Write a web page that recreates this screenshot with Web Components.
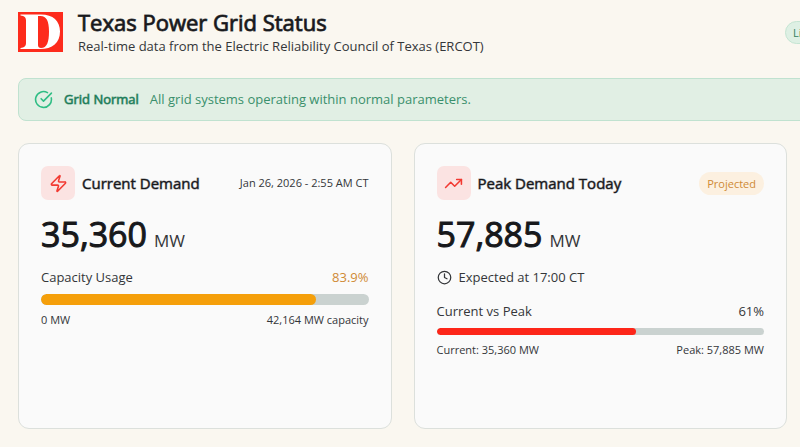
<!DOCTYPE html>
<html lang="en">
<head>
<meta charset="UTF-8">
<meta name="viewport" content="width=device-width, initial-scale=1">
<title>Texas Power Grid Status</title>
<style>
    body {
        margin: 0;
        overflow-x: hidden;
        background: #faf7f0;
        color: #343639;
        font-family: "Open Sans", "Noto Sans", sans-serif;
        font-size: 13px;
        line-height: 20px;
    }
</style>
</head>
<body>
<grid-dashboard>
    <grid-header slot="header">
        <span slot="title">Texas Power Grid Status</span>
        <span slot="subtitle">Real-time data from the Electric Reliability Council of Texas (ERCOT)</span>
        <status-pill slot="status" tone="live">Live</status-pill>
    </grid-header>

    <grid-banner slot="banner">
        <span slot="label">Grid Normal</span>
        All grid systems operating within normal parameters.
    </grid-banner>

    <metric-card icon="bolt" value="35,360">
        <span slot="title">Current Demand</span>
        <small-text slot="aside">Jan 26, 2026 - 2:55 AM CT</small-text>
        <usage-bar percent="83.9" tone="warn" size="large">
            <span slot="label">Capacity Usage</span>
            <span slot="start">0 MW</span>
            <span slot="end">42,164 MW capacity</span>
        </usage-bar>
    </metric-card>

    <metric-card icon="trend" value="57,885">
        <span slot="title">Peak Demand Today</span>
        <status-pill slot="aside" tone="projected">Projected</status-pill>
        <time-note>Expected at 17:00 CT</time-note>
        <usage-bar percent="61">
            <span slot="label">Current vs Peak</span>
            <span slot="start">Current: 35,360 MW</span>
            <span slot="end">Peak: 57,885 MW</span>
        </usage-bar>
    </metric-card>
</grid-dashboard>

<script>
const icons = {
    bolt: '<path d="M4 14a1 1 0 0 1-.78-1.63l9.9-10.2a.5.5 0 0 1 .86.46l-1.92 6.02A1 1 0 0 0 13 10h7a1 1 0 0 1 .78 1.63l-9.9 10.2a.5.5 0 0 1-.86-.46l1.92-6.02A1 1 0 0 0 11 14z"/>',
    trend: '<path d="M22 7l-8.5 8.5-5-5L2 17"/><path d="M16 7h6v6"/>',
    check: '<path d="M21.8 10A10 10 0 1 1 17 3.34"/><path d="M9 11l3 3L22 4"/>',
    clock: '<circle cx="12" cy="12" r="10"/><path d="M12 6v6l4 2"/>'
};

function svgIcon(name, size) {
    return `<svg width="${size}" height="${size}" viewBox="0 0 24 24" fill="none" stroke="currentColor"
        stroke-width="2" stroke-linecap="round" stroke-linejoin="round" aria-hidden="true">${icons[name]}</svg>`;
}

class GridDashboard extends HTMLElement {
    constructor() {
        super();
        this.attachShadow({ mode: 'open' });
        this.shadowRoot.innerHTML = `
        <style>
        :host {
            display: flex;
            flex-direction: column;
            box-sizing: border-box;
            min-height: 100vh;
            padding: 8px 13px 18px 18px;
        }

        /* header and banner run on past the two visible columns */
        .wide {
            margin-right: -48px;
        }

        .banner {
            margin: 22px -48px 22px 0;
        }

        .cards {
            flex: 1;
            display: grid;
            grid-template-columns: 1fr 1fr;
            gap: 22px;
        }
        </style>
        <div class="wide"><slot name="header"></slot></div>
        <div class="banner"><slot name="banner"></slot></div>
        <main class="cards"><slot></slot></main>
        `;
    }
}

class GridHeader extends HTMLElement {
    constructor() {
        super();
        this.attachShadow({ mode: 'open' });
        this.shadowRoot.innerHTML = `
        <style>
        :host {
            display: flex;
            align-items: center;
            gap: 15px;
        }

        .logo {
            flex: none;
            display: block;
        }

        .text {
            flex: 1;
        }

        h1 {
            margin: 0;
            color: #17181b;
            font-size: 22px;
            font-weight: 400;
            line-height: 28px;
            -webkit-text-stroke: 1px rgba(23, 24, 27, .8);
        }

        p {
            margin: 0;
        }
        </style>
        <svg class="logo" width="45" height="40" viewBox="0 0 45 40" role="img" aria-label="D">
            <rect width="45" height="40" fill="#fd2b1c"/>
            <path fill="#fff" fill-rule="evenodd" d="M2.500 2.500H23C35 2.500 42 9 42 19.500C42 31 34.500 37 22 37H2.500V36C6.500 35.500 8 34 8 31V8.500C8 5.500 6.500 4 2.500 3.500ZM20 4V33C20 35 21 36 23 36C29 36 31 30 31 19.500C31 9 28.500 4 22.500 4Z"/>
        </svg>
        <div class="text">
            <h1><slot name="title"></slot></h1>
            <p><slot name="subtitle"></slot></p>
        </div>
        <slot name="status"></slot>
        `;
    }
}

class GridBanner extends HTMLElement {
    constructor() {
        super();
        this.attachShadow({ mode: 'open' });
        this.shadowRoot.innerHTML = `
        <style>
        :host {
            display: flex;
            align-items: center;
            padding: 11px 15px;
            border: 1px solid #c0e2d0;
            border-radius: 8px;
            background: #e1efe4;
            color: #3a8f6c;
            line-height: 19px;
        }

        svg {
            flex: none;
            margin-right: 11px;
            color: #2fbd84;
        }

        strong {
            margin-right: 11px;
            color: #1b7b58;
            font-weight: 400;
            -webkit-text-stroke: 1px rgba(27, 123, 88, .6);
        }
        </style>
        ${svgIcon('check', 19)}
        <strong><slot name="label"></slot></strong>
        <span><slot></slot></span>
        `;
    }
}

class StatusPill extends HTMLElement {
    constructor() {
        super();
        this.attachShadow({ mode: 'open' });
        this.shadowRoot.innerHTML = `
        <style>
        :host {
            display: block;
            padding: 2px 7px;
            border: 1px solid transparent;
            border-radius: 12px;
            font-size: 11px;
            line-height: 17px;
        }

        :host([tone="live"]) {
            width: 34px;
            border-color: #c5e5d3;
            background: #def0e4;
            color: #35805f;
        }

        :host([tone="projected"]) {
            background: #fcf0e0;
            color: #cf8a35;
        }
        </style>
        <slot></slot>
        `;
    }
}

class SmallText extends HTMLElement {
    constructor() {
        super();
        this.attachShadow({ mode: 'open' });
        this.shadowRoot.innerHTML = `
        <style>
        :host {
            display: block;
            font-size: 11px;
            line-height: 16px;
        }
        </style>
        <slot></slot>
        `;
    }
}

class TimeNote extends HTMLElement {
    constructor() {
        super();
        this.attachShadow({ mode: 'open' });
        this.shadowRoot.innerHTML = `
        <style>
        :host {
            display: flex;
            align-items: center;
            gap: 7px;
        }
        </style>
        ${svgIcon('clock', 15)}
        <span><slot></slot></span>
        `;
    }
}

class MetricCard extends HTMLElement {
    constructor() {
        super();
        this.attachShadow({ mode: 'open' });
    }

    connectedCallback() {
        this.render();
    }

    render() {
        this.shadowRoot.innerHTML = `
        <style>
        :host {
            display: flex;
            flex-direction: column;
            gap: 14px;
            padding: 22px;
            border: 1px solid #dce0dc;
            border-radius: 11px;
            background: #fafafa;
        }

        header {
            display: flex;
            align-items: center;
            gap: 7px;
        }

        .icon {
            display: grid;
            place-items: center;
            width: 34px;
            height: 34px;
            border-radius: 7px;
            background: #fbe3e2;
            color: #f23a32;
        }

        h2 {
            flex: 1;
            margin: 0;
            color: #17181b;
            font-size: 15px;
            font-weight: 400;
            -webkit-text-stroke: 1px rgba(23, 24, 27, .5);
        }

        .value {
            display: flex;
            align-items: baseline;
            gap: 7px;
            margin-bottom: -8px;
            font-size: 17px;
            line-height: 40px;
        }

        .value b {
            color: #17181b;
            font-size: 34px;
            font-weight: 400;
            -webkit-text-stroke: 1px;
        }
        </style>
        <header>
            <div class="icon">${svgIcon(this.getAttribute('icon'), 19)}</div>
            <h2><slot name="title"></slot></h2>
            <slot name="aside"></slot>
        </header>
        <div class="value"><b>${this.getAttribute('value')}</b><span>MW</span></div>
        <slot></slot>
        `;
    }
}

class UsageBar extends HTMLElement {
    constructor() {
        super();
        this.attachShadow({ mode: 'open' });
    }

    connectedCallback() {
        this.render();
    }

    render() {
        const percent = this.getAttribute('percent');

        this.shadowRoot.innerHTML = `
        <style>
        :host {
            --fill: #fd2619;
            --thickness: 7px;
            display: flex;
            flex-direction: column;
            gap: 7px;
        }

        :host([tone="warn"]) {
            --fill: #f59f0a;
            --percent: #d08a35;
        }

        :host([size="large"]) {
            --thickness: 11px;
        }

        .row {
            display: flex;
            justify-content: space-between;
        }

        .percent {
            color: var(--percent, inherit);
        }

        .track {
            height: var(--thickness);
            border-radius: 6px;
            background: #cad2d0;
            overflow: hidden;
        }

        .fill {
            width: ${percent}%;
            height: 100%;
            border-radius: 6px;
            background: var(--fill);
        }

        .ends {
            font-size: 11px;
            line-height: 16px;
        }
        </style>
        <div class="row">
            <slot name="label"></slot>
            <span class="percent">${percent}%</span>
        </div>
        <div class="track" role="progressbar" aria-label="Usage" aria-valuenow="${percent}" aria-valuemin="0" aria-valuemax="100">
            <div class="fill"></div>
        </div>
        <div class="row ends">
            <slot name="start"></slot>
            <slot name="end"></slot>
        </div>
        `;
    }
}

customElements.define('grid-dashboard', GridDashboard);
customElements.define('grid-header', GridHeader);
customElements.define('grid-banner', GridBanner);
customElements.define('status-pill', StatusPill);
customElements.define('small-text', SmallText);
customElements.define('time-note', TimeNote);
customElements.define('metric-card', MetricCard);
customElements.define('usage-bar', UsageBar);
</script>
</body>
</html>
